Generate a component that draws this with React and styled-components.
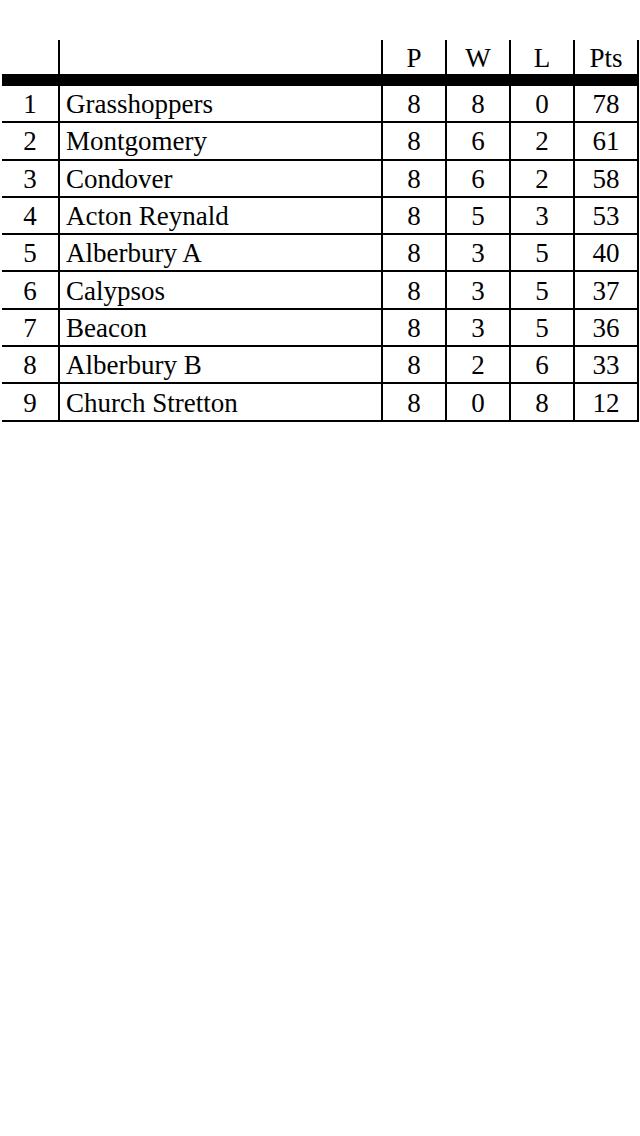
import styled, { createGlobalStyle } from 'styled-components';

const GlobalStyle = createGlobalStyle`
  html, body {
    margin: 0;
    padding: 0;
    background: #ffffff;
  }
  body {
    font-family: "Liberation Serif", "Times New Roman", serif;
    color: #000;
  }
`;

const teams = [
  { pos: 1, name: 'Grasshoppers', p: 8, w: 8, l: 0, pts: 78 },
  { pos: 2, name: 'Montgomery', p: 8, w: 6, l: 2, pts: 61 },
  { pos: 3, name: 'Condover', p: 8, w: 6, l: 2, pts: 58 },
  { pos: 4, name: 'Acton Reynald', p: 8, w: 5, l: 3, pts: 53 },
  { pos: 5, name: 'Alberbury A', p: 8, w: 3, l: 5, pts: 40 },
  { pos: 6, name: 'Calypsos', p: 8, w: 3, l: 5, pts: 37 },
  { pos: 7, name: 'Beacon', p: 8, w: 3, l: 5, pts: 36 },
  { pos: 8, name: 'Alberbury B', p: 8, w: 2, l: 6, pts: 33 },
  { pos: 9, name: 'Church Stretton', p: 8, w: 0, l: 8, pts: 12 },
];

function App() {
  return (
    <>
      <GlobalStyle />
      <Page>
        <Table>
          <HeaderRow>
            <Cell />
            <Cell $lined />
            <Cell $lined $center>P</Cell>
            <Cell $lined $center>W</Cell>
            <Cell $lined $center>L</Cell>
            <Cell $lined $last $center>Pts</Cell>
          </HeaderRow>
          <Bar />
          {teams.map((t) => (
            <Row key={t.pos}>
              <Cell $center>{t.pos}</Cell>
              <Cell $lined>{t.name}</Cell>
              <Cell $lined $center>{t.p}</Cell>
              <Cell $lined $center>{t.w}</Cell>
              <Cell $lined $center>{t.l}</Cell>
              <Cell $lined $last $center>{t.pts}</Cell>
            </Row>
          ))}
        </Table>
      </Page>
    </>
  );
}

export default App;

const Page = styled.div`
  width: 640px;
  min-height: 1136px;
  padding-top: 40px;
  box-sizing: border-box;
`;

const Table = styled.div`
  margin-left: 2px;
  width: 637px;
  font-size: 27px;
  line-height: 1;
`;

const columns = '56px 323px 64px 64px 64px 66px';

const HeaderRow = styled.div`
  display: grid;
  grid-template-columns: ${columns};
  height: 34px;
`;

const Bar = styled.div`
  height: 12px;
  background: #000;
`;

const Row = styled.div`
  display: grid;
  grid-template-columns: ${columns};
  height: 37.3px;
  box-sizing: border-box;
  border-bottom: 2px solid #000;
`;

const Cell = styled.div`
  box-sizing: border-box;
  display: flex;
  align-items: center;
  justify-content: ${(p) => (p.$center ? 'center' : 'flex-start')};
  padding-left: ${(p) => (p.$center ? '0' : '6px')};
  padding-top: 2px;
  border-left: ${(p) => (p.$lined ? '2px solid #000' : 'none')};
  border-right: ${(p) => (p.$last ? '2px solid #000' : 'none')};
  white-space: nowrap;
`;
